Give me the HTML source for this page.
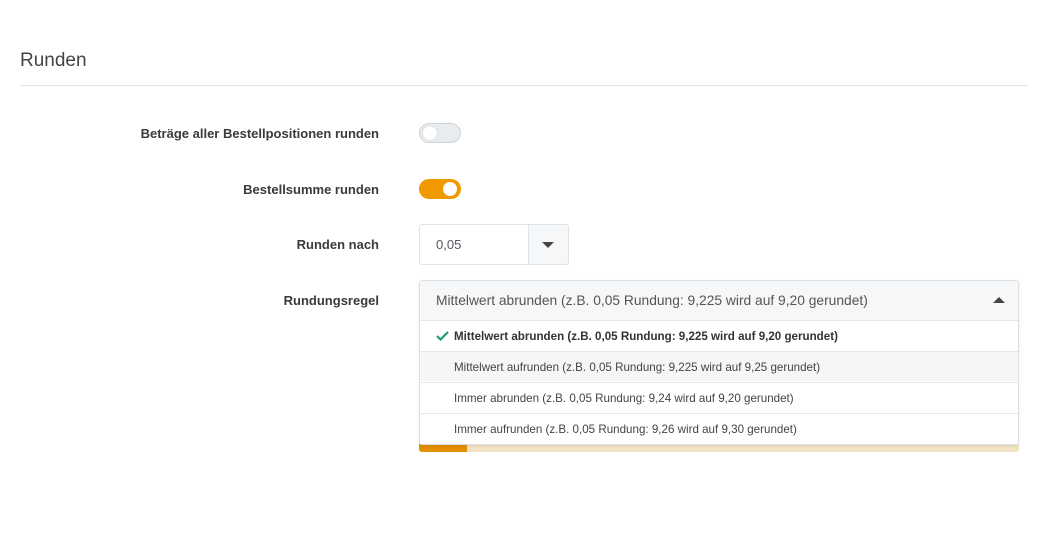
<!DOCTYPE html>
<html><head><style>
body{margin:0;width:1052px;height:533px;background:#fff;font-family:"Liberation Sans",sans-serif;position:relative;overflow:hidden;color:#333}
.a{position:absolute}
.lbl{position:absolute;right:673px;font-size:13px;font-weight:bold;color:#3a3a3a;white-space:nowrap}
.tg{position:absolute;left:419px;width:42px;height:20px;border-radius:10px}
.kn{position:absolute;top:3px;width:14px;height:14px;border-radius:50%;background:#fff}
.it{position:absolute;left:420px;width:598px;height:30px;border-top:1px solid #e4e6ea;font-size:11.6px;color:#444;line-height:32px;padding-left:34px;box-sizing:border-box;white-space:nowrap}
</style></head><body>
<div class="a" style="left:20px;top:50px;font-size:19px;color:#444">Runden</div>
<div class="a" style="left:20px;top:85px;width:1008px;height:1px;background:#e3e3e3"></div>

<div class="lbl" style="top:126px">Beträge aller Bestellpositionen runden</div>
<div class="tg" style="top:123px;background:#e9ecef;border:1px solid #cfd3d8;box-sizing:border-box"><div class="kn" style="left:3px;top:2px;box-shadow:0 0 1px #aaa"></div></div>

<div class="lbl" style="top:182px">Bestellsumme runden</div>
<div class="tg" style="top:179px;background:#f09a00"><div class="kn" style="left:24px"></div></div>

<div class="lbl" style="top:237px">Runden nach</div>
<div class="a" style="left:528px;top:225px;width:40px;height:39px;background:#f6f7f9;border-left:1px solid #dfe2e6"></div>
<div class="a" style="left:419px;top:224px;width:150px;height:41px;border:1px solid #dfe2e6;box-sizing:border-box;border-radius:3px"></div>
<div class="a" style="left:436px;top:237px;font-size:13px;color:#556">0,05</div>
<div class="a" style="left:542px;top:242px;width:0;height:0;border-left:6px solid transparent;border-right:6px solid transparent;border-top:6px solid #444"></div>

<div class="lbl" style="top:293px">Rundungsregel</div>
<div class="a" style="left:419px;top:444px;width:600px;height:8px;background:#f2e2c4;border-radius:0 0 3px 3px"></div>
<div class="a" style="left:419px;top:444px;width:48px;height:8px;background:#e28f00;border-radius:0 0 0 3px"></div>
<div class="a" style="left:419px;top:280px;width:600px;height:165px;border:1px solid #dcdfe3;box-sizing:border-box;border-radius:3px;background:#fff;box-shadow:0 1px 3px rgba(0,0,0,.08)"></div>
<div class="a" style="left:420px;top:281px;width:598px;height:39px;background:#f6f7f9"></div>
<div class="a" style="left:436px;top:293px;font-size:13.8px;color:#555;white-space:nowrap">Mittelwert abrunden (z.B. 0,05 Rundung: 9,225 wird auf 9,20 gerundet)</div>
<div class="a" style="left:993px;top:297px;width:0;height:0;border-left:6px solid transparent;border-right:6px solid transparent;border-bottom:6px solid #444"></div>
<div class="it" style="top:320px;font-weight:bold;color:#333">Mittelwert abrunden (z.B. 0,05 Rundung: 9,225 wird auf 9,20 gerundet)</div>
<svg class="a" style="left:436px;top:331px" width="13" height="10" viewBox="0 0 13 10"><path d="M1 5 L4.5 8.5 L12 1" fill="none" stroke="#1a9a7a" stroke-width="2.2"/></svg>
<div class="it" style="top:351px;background:#f5f6f8">Mittelwert aufrunden (z.B. 0,05 Rundung: 9,225 wird auf 9,25 gerundet)</div>
<div class="it" style="top:382px">Immer abrunden (z.B. 0,05 Rundung: 9,24 wird auf 9,20 gerundet)</div>
<div class="it" style="top:413px">Immer aufrunden (z.B. 0,05 Rundung: 9,26 wird auf 9,30 gerundet)</div>
</body></html>
